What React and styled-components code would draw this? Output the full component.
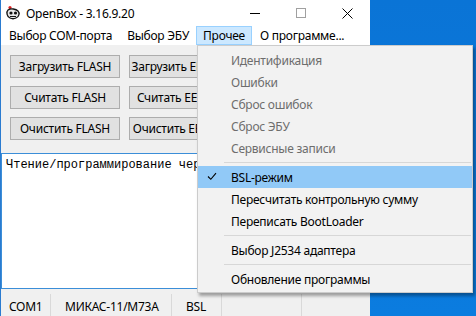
import React from 'react'
import styled, { createGlobalStyle } from 'styled-components'

const GlobalStyle = createGlobalStyle`
  html, body {
    margin: 0;
    padding: 0;
    overflow: hidden;
  }
  body {
    font-family: "Noto Sans", "Liberation Sans", sans-serif;
    font-size: 12px;
    letter-spacing: -0.25px;
    color: #000;
  }
`

const Desktop = styled.div`
  position: relative;
  display: flex;
  width: 476px;
  height: 316px;
  overflow: hidden;
  background: linear-gradient(180deg, #0a74d6 0%, #0b7cdf 100%);
`

const Window = styled.div`
  display: flex;
  flex-direction: column;
  width: 369px;
  height: 100%;
  background: #f0f0f0;
  border-left: 1px solid #2a7bd0;
`

const TitleBar = styled.div`
  display: flex;
  align-items: center;
  height: 26px;
  flex-shrink: 0;
  background: #fff;
`

const TitleIcon = styled.div`
  display: flex;
  width: 16px;
  height: 16px;
  margin: 0 5px 0 4px;
`

const TitleText = styled.span`
  flex: 1;
  font-size: 12px;
`

const Control = styled.div`
  display: flex;
  align-items: center;
  justify-content: center;
  width: 46px;
  height: 26px;
`

const MenuBar = styled.div`
  display: flex;
  align-items: stretch;
  height: 19px;
  flex-shrink: 0;
  padding-left: 1px;
  background: #fff;
`

const MenuItem = styled.div`
  display: flex;
  align-items: center;
  padding: 0 6px;
  margin-right: ${p => p.$gap || 0}px;
  border: 1px solid ${p => (p.$open ? '#99d1ff' : 'transparent')};
  background: ${p => (p.$open ? '#cce8ff' : 'transparent')};
  white-space: nowrap;
`

const Body = styled.div`
  display: flex;
  flex-direction: column;
  flex: 1;
  min-height: 0;
`

const ButtonGrid = styled.div`
  display: grid;
  grid-template-columns: 110px 110px;
  grid-auto-rows: 23px;
  column-gap: 9px;
  row-gap: 8px;
  padding: 10px 0 0 9px;
`

const Button = styled.div`
  display: flex;
  align-items: center;
  justify-content: center;
  background: #e1e1e1;
  border: 1px solid #adadad;
  white-space: nowrap;
  overflow: hidden;
`

const LogArea = styled.div`
  height: 126px;
  margin-top: 13px;
  padding: 4px 4px;
  background: #fff;
  border: 1px solid #3b8ed8;
  border-right: none;
  font-family: "Liberation Mono", "DejaVu Sans Mono", monospace;
  font-size: 12px;
  letter-spacing: 0;
  line-height: 14px;
  white-space: nowrap;
  overflow: hidden;
`

const StatusBar = styled.div`
  display: flex;
  align-items: flex-start;
  height: 22px;
  margin-top: auto;
  flex-shrink: 0;
  padding-top: 3px;
`

const StatusPanel = styled.div`
  display: flex;
  align-items: center;
  width: ${p => p.$w}px;
  height: 24px;
  padding-left: ${p => p.$pad || 0}px;
  border-right: 1px solid #d9d9d9;
  box-sizing: border-box;
  white-space: nowrap;
`

const Popup = styled.div`
  position: absolute;
  left: 197px;
  top: 45px;
  width: 276px;
  padding: 3px 0 2px;
  box-sizing: border-box;
  background: #f2f2f2;
  border: 1px solid #cccccc;
  box-shadow: 2px 3px 3px rgba(0, 0, 0, 0.35);
`

const PopupItem = styled.div`
  display: flex;
  align-items: center;
  height: 22px;
  padding-left: 33px;
  position: relative;
  color: ${p => (p.$disabled ? '#6d6d6d' : '#000')};
  background: ${p => (p.$active ? '#91c9f7' : 'transparent')};
  white-space: nowrap;
`

const Check = styled.span`
  position: absolute;
  left: 9px;
  top: 6px;
  display: flex;
`

const Separator = styled.div`
  height: 1px;
  margin: 3px 1px 3px 26px;
  background: #d7d7d7;
`

const AppIcon = () => (
  <svg width="16" height="16" viewBox="0 0 16 16">
    <circle cx="5" cy="2.5" r="1.6" fill="#d22" />
    <path d="M3 5 C1 7 2 12 5 13 C7 14 9 14 11 13 C14 12 15 8 13 6 C11 4 6 3 3 5 Z" fill="#e8e8e8" stroke="#111" strokeWidth="1.3" />
    <circle cx="6" cy="8" r="1.6" fill="#111" />
    <circle cx="10.5" cy="8" r="1.6" fill="#111" />
    <path d="M5 11.5 L11 11.5" stroke="#111" strokeWidth="1" />
  </svg>
)

const MinIcon = () => (
  <svg width="10" height="10" viewBox="0 0 10 10">
    <path d="M0 5.5 H10" stroke="#000" strokeWidth="1" />
  </svg>
)

const MaxIcon = () => (
  <svg width="10" height="10" viewBox="0 0 10 10">
    <rect x="0.5" y="0.5" width="9" height="9" fill="none" stroke="#a0a0a0" strokeWidth="1" />
  </svg>
)

const CloseIcon = () => (
  <svg width="11" height="11" viewBox="0 0 11 11">
    <path d="M0.5 0.5 L10.5 10.5 M10.5 0.5 L0.5 10.5" stroke="#000" strokeWidth="1" />
  </svg>
)

const CheckIcon = () => (
  <svg width="10" height="9" viewBox="0 0 10 9">
    <path d="M1 4.5 L3.8 7.3 L9 1.2" fill="none" stroke="#000" strokeWidth="1.1" />
  </svg>
)

const buttons = [
  'Загрузить FLASH', 'Загрузить EEPROM',
  'Считать FLASH', 'Считать EEPROM',
  'Очистить FLASH', 'Очистить EEPROM',
]

export default function App() {
  return (
    <>
      <GlobalStyle />
      <Desktop>
        <Window>
          <TitleBar>
            <TitleIcon><AppIcon /></TitleIcon>
            <TitleText>OpenBox - 3.16.9.20</TitleText>
            <Control><MinIcon /></Control>
            <Control><MaxIcon /></Control>
            <Control><CloseIcon /></Control>
          </TitleBar>
          <MenuBar>
            <MenuItem $gap={1}>Выбор COM-порта</MenuItem>
            <MenuItem>Выбор ЭБУ</MenuItem>
            <MenuItem $open $gap={1}>Прочее</MenuItem>
            <MenuItem>О программе...</MenuItem>
          </MenuBar>
          <Body>
            <ButtonGrid>
              {buttons.map(b => <Button key={b}>{b}</Button>)}
            </ButtonGrid>
            <LogArea>Чтение/программирование чер</LogArea>
            <StatusBar>
              <StatusPanel $w={50} $pad={8}>COM1</StatusPanel>
              <StatusPanel $w={121} $pad={14}>МИКАС-11/М73А</StatusPanel>
              <StatusPanel $w={50} $pad={14}>BSL</StatusPanel>
              <StatusPanel $w={80} />
            </StatusBar>
          </Body>
        </Window>
        <Popup>
          <PopupItem $disabled>Идентификация</PopupItem>
          <PopupItem $disabled>Ошибки</PopupItem>
          <PopupItem $disabled>Сброс ошибок</PopupItem>
          <PopupItem $disabled>Сброс ЭБУ</PopupItem>
          <PopupItem $disabled>Сервисные записи</PopupItem>
          <Separator />
          <PopupItem $active><Check><CheckIcon /></Check>BSL-режим</PopupItem>
          <PopupItem>Пересчитать контрольную сумму</PopupItem>
          <PopupItem>Переписать BootLoader</PopupItem>
          <Separator />
          <PopupItem>Выбор J2534 адаптера</PopupItem>
          <Separator />
          <PopupItem>Обновление программы</PopupItem>
        </Popup>
      </Desktop>
    </>
  )
}
